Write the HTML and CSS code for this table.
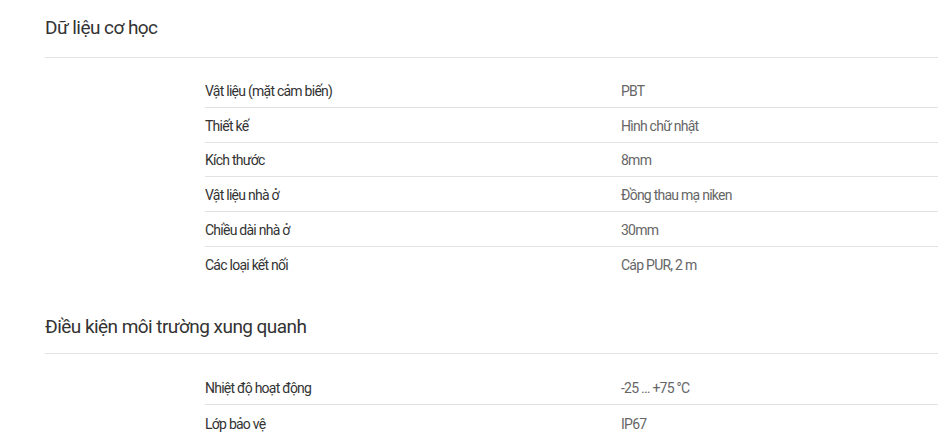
FILE: index.html
```html
<!DOCTYPE html>
<html lang="vi">
<head>
<meta charset="utf-8">
<link rel="stylesheet" href="styles.css">
</head>
<body>
<div class="page">
  <section class="group">
    <h2 class="group-title">Dữ liệu cơ học</h2>
    <div class="specs">
      <div class="row"><div class="label">Vật liệu (mặt cảm biến)</div><div class="value">PBT</div></div>
      <div class="row"><div class="label">Thiết kế</div><div class="value">Hình chữ nhật</div></div>
      <div class="row"><div class="label">Kích thước</div><div class="value">8mm</div></div>
      <div class="row"><div class="label">Vật liệu nhà ở</div><div class="value">Đồng thau mạ niken</div></div>
      <div class="row"><div class="label">Chiều dài nhà ở</div><div class="value">30mm</div></div>
      <div class="row"><div class="label">Các loại kết nối</div><div class="value">Cáp PUR, 2 m</div></div>
    </div>
  </section>
  <section class="group">
    <h2 class="group-title">Điều kiện môi trường xung quanh</h2>
    <div class="specs">
      <div class="row"><div class="label">Nhiệt độ hoạt động</div><div class="value">-25 … +75 °C</div></div>
      <div class="row"><div class="label">Lớp bảo vệ</div><div class="value">IP67</div></div>
    </div>
  </section>
</div>
</body>
</html>
```
FILE: styles.css
```css
html, body {
  margin: 0;
  padding: 0;
  background: #fff;
}
body {
  font-family: Roboto, "Liberation Sans", sans-serif;
  color: #333;
}
.page {
  padding-left: 45px;
}
.group-title {
  margin: 0;
  font-weight: 400;
  font-size: 19px;
  letter-spacing: -0.55px;
  line-height: 24px;
  padding: 16px 0 17px;
  border-bottom: 1px solid #e2e2e2;
  color: #333;
}
.group + .group .group-title {
  padding-bottom: 14px;
}
.specs {
  margin-left: 160px;
  padding: 15px 0 17px;
}
.group + .group .specs {
  padding-top: 17px;
}
.row {
  display: flex;
  box-sizing: border-box;
  height: 34.75px;
  padding-top: 2px;
  align-items: center;
  font-size: 14px;
  letter-spacing: -0.75px;
  border-bottom: 1px solid #e2e2e2;
}
.row:last-child {
  border-bottom: none;
}
.label {
  width: 416px;
  color: #333;
}
.value {
  color: #666;
}
```
